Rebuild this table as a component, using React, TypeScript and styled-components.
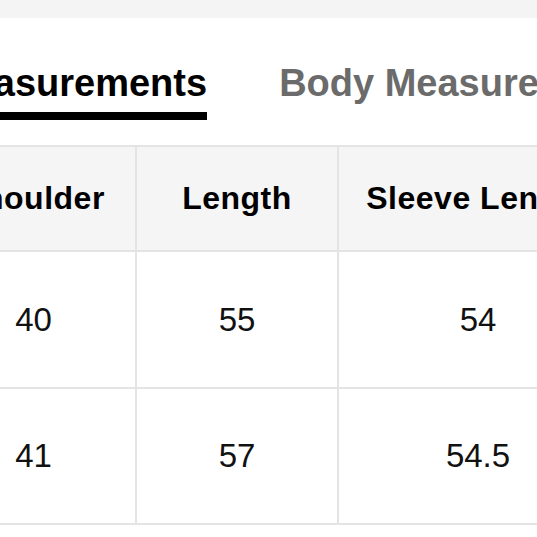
import React from 'react';
import styled, { createGlobalStyle } from 'styled-components';

const GlobalStyle = createGlobalStyle`
  html, body {
    margin: 0;
    padding: 0;
    background: #ffffff;
    overflow: hidden;
  }
  body {
    font-family: "Liberation Sans", Arial, Helvetica, sans-serif;
  }
`;

const rows = [
  ['40', '55', '54'],
  ['41', '57', '54.5'],
];

const App: React.FC = () => {
  return (
    <Page>
      <GlobalStyle />
      <TopBar />
      <Tabs>
        <Tab active>Measurements</Tab>
        <Tab>Body Measurements</Tab>
      </Tabs>
      <SizeTable>
        <HeadCell>Shoulder</HeadCell>
        <HeadCell>Length</HeadCell>
        <HeadCell>Sleeve Length</HeadCell>
        {rows.map((row, i) =>
          row.map((value, j) => <Cell key={`${i}-${j}`}>{value}</Cell>)
        )}
      </SizeTable>
    </Page>
  );
};

const Page = styled.div`
  width: 537px;
  height: 537px;
  overflow: hidden;
  background: #fff;
`;

const TopBar = styled.div`
  height: 18px;
  background: #f4f4f4;
`;

const Tabs = styled.div`
  display: flex;
  gap: 72px;
  margin-left: -59px;
  padding-top: 46px;
  white-space: nowrap;
`;

const Tab = styled.div<{ active?: boolean }>`
  flex: none;
  font-size: 38px;
  line-height: 38px;
  font-weight: 700;
  color: ${({ active }) => (active ? '#000' : '#6b6b6b')};
  padding-bottom: 10px;
  border-bottom: 8px solid ${({ active }) => (active ? '#000' : 'transparent')};
`;

const SizeTable = styled.div`
  display: grid;
  grid-template-columns: 205px 202px 280px;
  grid-template-rows: 105px 137px 136px;
  margin-left: -68px;
  margin-top: 25px;
  border-top: 2px solid #e4e4e4;
  width: max-content;
`;

const BaseCell = styled.div`
  display: flex;
  align-items: center;
  justify-content: center;
  box-sizing: border-box;
  border-right: 2px solid #e4e4e4;
  border-bottom: 2px solid #e4e4e4;
  white-space: nowrap;
  color: #111;
`;

const HeadCell = styled(BaseCell)`
  background: #f5f5f5;
  font-size: 32px;
  font-weight: 700;
  letter-spacing: 0.5px;
  color: #000;
`;

const Cell = styled(BaseCell)`
  font-size: 33px;
  background: #fff;
`;

export default App;
